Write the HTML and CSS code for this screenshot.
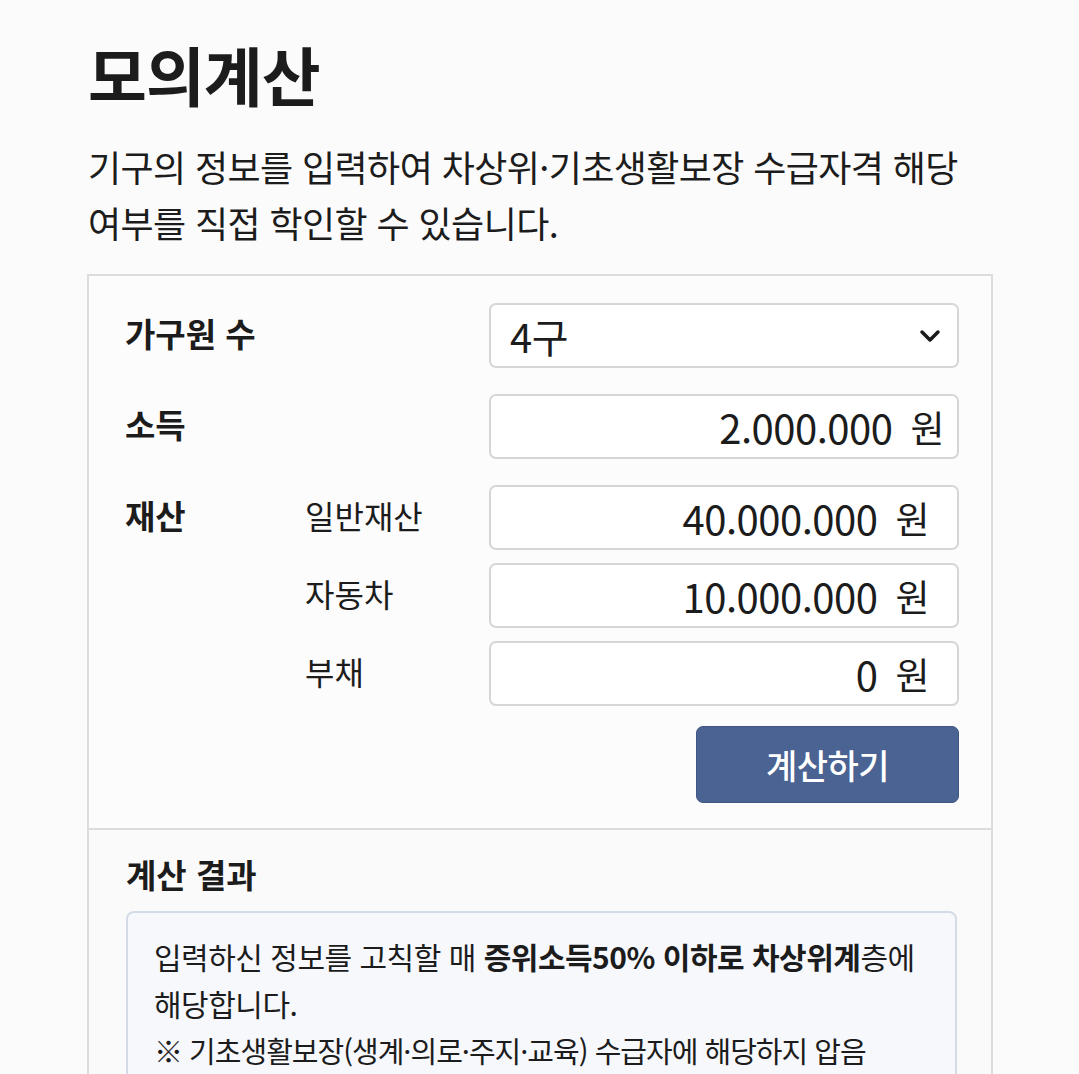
FILE: index.html
```html
<!DOCTYPE html>
<html lang="ko">

<head>
    <meta charset="UTF-8">
    <meta name="viewport" content="width=device-width, initial-scale=1.0">
    <title>모의계산</title>
    <link rel="stylesheet" href="styles.css">
</head>

<body>
    <div class="page">
        <h1 class="title">모의계산</h1>
        <p class="intro">기구의 정보를 입력하여 차상위·기초생활보장 수급자격 해당 여부를 직접 학인할 수 있습니다.</p>

        <div class="card">
            <div class="calcForm">
                <div class="label wide">가구원 수</div>
                <div class="field select">
                    <span>4구</span>
                    <svg width="22" height="14" viewBox="0 0 22 14">
                        <path d="M3 3 L11 11 L19 3" fill="none" stroke="#1a1a1a" stroke-width="3.5"
                            stroke-linecap="round" stroke-linejoin="round" />
                    </svg>
                </div>

                <div class="label wide">소득</div>
                <div class="field value income">2.000.000<span class="won">원</span></div>

                <div class="label asset">재산</div>
                <div class="sublabel">일반재산</div>
                <div class="field value">40.000.000<span class="won">원</span></div>

                <div class="sublabel">자동차</div>
                <div class="field value">10.000.000<span class="won">원</span></div>

                <div class="sublabel">부채</div>
                <div class="field value">0<span class="won">원</span></div>

                <button class="calcBtn">계산하기</button>
            </div>

            <div class="result">
                <h2 class="resultTitle">계산 결과</h2>
                <div class="resultBox">
                    <p>입력하신 정보를 고칙할 매 <b>증위소득50% 이하로 차상위계</b>층에 해당합니다.</p>
                    <p class="note">※ 기초생활보장(생계·의로·주지·교육) 수급자에 해당하지 압음</p>
                </div>
            </div>
        </div>
    </div>
</body>

</html>
```

FILE: styles.css
```css
body {
    margin: 0;
    background-color: #fbfbfb;
    color: #1c1c1c;
    font-family: "Noto Sans CJK KR", "Noto Sans", sans-serif;
}

.page {
    padding-left: 87px;
    width: 906px;
}

.title {
    margin: 33px 0 0 1px;
    font-size: 64px;
    line-height: 80px;
    font-weight: 700;
    letter-spacing: -1px;
}

.intro {
    margin: 25px 0 0 1px;
    font-size: 36px;
    line-height: 56px;
    font-weight: 400;
    letter-spacing: -0.6px;
}

.card {
    margin-top: 24px;
    border: 2px solid #dcdcdc;
    border-bottom: none;
    background-color: #fcfcfc;
}

.calcForm {
    display: grid;
    grid-template-columns: 180px 184px 470px;
    grid-template-rows: 78px 78px 65px 65px 65px auto;
    row-gap: 13px;
    align-items: start;
    padding: 27px 32px 25px 36px;
    border-bottom: 2px solid #dcdcdc;
}

.label,
.sublabel {
    height: 65px;
    display: flex;
    align-items: center;
    padding-bottom: 5px;
    box-sizing: border-box;
    font-size: 33px;
}

.label {
    font-weight: 700;
}

.label.wide {
    grid-column: 1 / 3;
}

.label.asset {
    grid-row: 3 / 6;
}

.sublabel {
    grid-column: 2;
    font-size: 32px;
    font-weight: 400;
}

.field {
    grid-column: 3;
    height: 65px;
    box-sizing: border-box;
    border: 2px solid #d6d6d6;
    border-radius: 7px;
    background-color: #fff;
    display: flex;
    align-items: center;
    font-size: 40px;
    letter-spacing: -0.5px;
}

.select {
    justify-content: space-between;
    padding: 0 16px 0 19px;
}

.value {
    justify-content: flex-end;
    padding-right: 28px;
}

.value.income {
    padding-right: 13px;
}

.won {
    margin-left: 18px;
    font-size: 37px;
}

.calcBtn {
    grid-column: 3;
    justify-self: end;
    width: 263px;
    height: 77px;
    margin-top: 7px;
    border: 1px solid #3f5683;
    border-radius: 7px;
    background-color: #4a6393;
    color: #fff;
    font-family: "Noto Sans CJK KR", "Noto Sans", sans-serif;
    font-size: 34px;
    font-weight: 500;
    letter-spacing: -0.5px;
}

.result {
    padding: 19px 34px 0 37px;
    background-color: #fafafa;
}

.resultTitle {
    margin: 0;
    font-size: 33px;
    line-height: 50px;
    font-weight: 700;
}

.resultBox {
    margin-top: 12px;
    border: 2px solid #d3dbe6;
    border-radius: 8px;
    background-color: #f6f8fc;
    padding: 20px 26px 10px 26px;
}

.resultBox p {
    margin: 0;
    font-size: 30px;
    line-height: 47px;
    letter-spacing: -0.5px;
}

.resultBox .note {
    font-size: 29px;
    letter-spacing: -1px;
}

.resultBox b {
    font-weight: 700;
}
```
